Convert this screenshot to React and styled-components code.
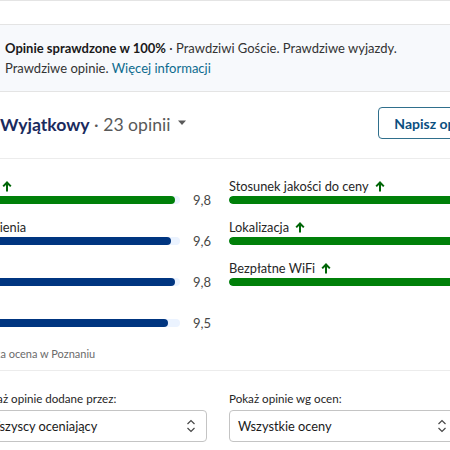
import styled, { createGlobalStyle } from "styled-components";

const GlobalStyle = createGlobalStyle`
  * { box-sizing: border-box; }
  body {
    margin: 0;
    background: #ffffff;
    font-family: Lato, "Noto Sans", sans-serif;
    color: #1a1a1a;
    overflow: hidden;
  }
`;

const leftScores = [
  { label: "Personel", value: 9.8, high: true },
  { label: "Udogodnienia", value: 9.6 },
  { label: "Czystość", value: 9.8 },
  { label: "Komfort", value: 9.5 },
];

const rightScores = [
  { label: "Stosunek jakości do ceny", value: 9.8, high: true },
  { label: "Lokalizacja", value: 9.8, high: true },
  { label: "Bezpłatne WiFi", value: 9.8, high: true },
];

const UpArrow = () => (
  <svg width="10" height="11" viewBox="0 0 10 11" aria-hidden="true">
    <path
      d="M5 10.5V2M1.2 5.4L5 1.5l3.8 3.9"
      fill="none"
      stroke="#006607"
      strokeWidth="2"
    />
  </svg>
);

const Chevrons = () => (
  <svg width="10" height="14" viewBox="0 0 10 14" aria-hidden="true">
    <path
      d="M1.5 5L5 1.5 8.5 5M1.5 9L5 12.5 8.5 9"
      fill="none"
      stroke="#474747"
      strokeWidth="1.2"
    />
  </svg>
);

const Caret = () => (
  <svg width="10" height="6" viewBox="0 0 10 6" aria-hidden="true">
    <path d="M1 0.5h8L5 5z" fill="#595959" />
  </svg>
);

const ScoreRow = ({ label, value, high, color }) => (
  <RowBox>
    <RowLabel>
      {label}
      {high && <UpArrow />}
    </RowLabel>
    <BarLine>
      <Track>
        <Fill $color={color} style={{ width: `${value * 10}%` }} />
      </Track>
      <Value>{String(value).replace(".", ",")}</Value>
    </BarLine>
  </RowBox>
);

const App = () => {
  return (
    <Page>
      <GlobalStyle />
      <Banner>
        <strong>Opinie sprawdzone w 100%</strong> · Prawdziwi Goście. Prawdziwe
        wyjazdy.
        <br />
        Prawdziwe opinie. <a href="#more">Więcej informacji</a>
      </Banner>
      <Section>
        <Header>
          <TitleGroup>
            <ScoreBadge>9,7</ScoreBadge>
            <Title>
              <b>Wyjątkowy</b> · 23 opinii
            </Title>
            <Caret />
          </TitleGroup>
          <WriteButton>Napisz opinię</WriteButton>
        </Header>
        <ScoreGrid>
          <Column>
            {leftScores.map((s) => (
              <ScoreRow
                key={s.label}
                {...s}
                color={s.high ? "#008009" : "#003580"}
              />
            ))}
            <Footnote>Wysoka ocena w Poznaniu</Footnote>
          </Column>
          <Column>
            {rightScores.map((s) => (
              <ScoreRow key={s.label} {...s} color="#008009" />
            ))}
          </Column>
        </ScoreGrid>
        <Filters>
          <Field>
            <FieldLabel>Pokaż opinie dodane przez:</FieldLabel>
            <SelectBox>
              <span>Wszyscy oceniający</span>
              <Chevrons />
            </SelectBox>
          </Field>
          <Field>
            <FieldLabel>Pokaż opinie wg ocen:</FieldLabel>
            <SelectBox>
              <span>Wszystkie oceny</span>
              <Chevrons />
            </SelectBox>
          </Field>
        </Filters>
      </Section>
    </Page>
  );
};

export default App;

// Styled components

const Page = styled.div`
  width: 450px;
  height: 450px;
  overflow: hidden;
  border-top: 1px solid #e4e4e4;
`;

const Banner = styled.div`
  margin-top: 23px;
  padding: 13px 5px;
  background-color: #f7f9fc;
  border-top: 1px solid #e4e4e4;
  border-bottom: 1px solid #e4e4e4;
  font-size: 13px;
  line-height: 20px;
  color: #333333;
  white-space: nowrap;

  strong {
    font-weight: 700;
    color: #1a1a1a;
  }

  a {
    color: #0d6b8e;
    text-decoration: none;
  }
`;

const Section = styled.div`
  width: 546px;
  margin-left: -52px;
`;

const Header = styled.div`
  display: flex;
  align-items: center;
  justify-content: space-between;
  margin-top: 15px;
  padding-bottom: 19px;
  border-bottom: 1px solid #ececec;
`;

const TitleGroup = styled.div`
  display: flex;
  align-items: center;
  gap: 7px;
`;

const ScoreBadge = styled.div`
  width: 36px;
  height: 32px;
  margin-right: 9px;
  border-radius: 6px 6px 6px 0;
  background-color: #003580;
  color: #ffffff;
  font-weight: 700;
  font-size: 15px;
  display: flex;
  align-items: center;
  justify-content: center;
`;

const Title = styled.h2`
  margin: 0;
  padding-top: 4px;
  font-size: 17.6px;
  line-height: 24px;
  font-weight: 400;
  color: #595959;

  b {
    font-weight: 700;
    color: #1a2b5e;
  }
`;

const WriteButton = styled.button`
  flex-shrink: 0;
  height: 32px;
  padding: 0 15px;
  border: 1px solid #2f6f8c;
  border-radius: 4px;
  background: #ffffff;
  color: #0b4f80;
  font-family: inherit;
  font-size: 14px;
  font-weight: 700;
`;

const ScoreGrid = styled.div`
  display: grid;
  grid-template-columns: 259px 259px;
  column-gap: 22px;
  padding-top: 17px;
  padding-bottom: 8px;
  border-bottom: 1px solid #ececec;
`;

const Column = styled.div`
  display: flex;
  flex-direction: column;
  gap: 13px;
`;

const RowBox = styled.div`
  display: flex;
  flex-direction: column;
`;

const RowLabel = styled.div`
  display: flex;
  align-items: center;
  gap: 6px;
  height: 20px;
  font-size: 12.8px;
  color: #262626;
`;

const BarLine = styled.div`
  display: flex;
  align-items: center;
  gap: 13px;
`;

const Track = styled.div`
  flex-shrink: 0;
  width: 232px;
  height: 8px;
  border-radius: 4px;
  background-color: #ebf3ff;
  overflow: hidden;
`;

const Fill = styled.div`
  height: 100%;
  border-radius: 4px;
  background-color: ${(p) => p.$color};
`;

const Value = styled.span`
  flex-shrink: 0;
  font-size: 13px;
  line-height: 8px;
  color: #474747;
`;

const Footnote = styled.div`
  margin-top: 6px;
  padding-left: 19px;
  font-size: 11px;
  line-height: 16px;
  color: #6b6b6b;
`;

const Filters = styled.div`
  display: grid;
  grid-template-columns: 229px 229px;
  column-gap: 22px;
  margin-left: 30px;
  padding-top: 18px;
`;

const Field = styled.div`
  display: flex;
  flex-direction: column;
  gap: 1px;
`;

const FieldLabel = styled.label`
  font-size: 11.6px;
  line-height: 20px;
  color: #262626;
`;

const SelectBox = styled.div`
  height: 32px;
  display: flex;
  align-items: center;
  justify-content: space-between;
  padding: 0 10px 0 8px;
  border: 1px solid #c4c4c4;
  border-radius: 4px;
  font-size: 12.8px;
  color: #1a1a1a;
`;
